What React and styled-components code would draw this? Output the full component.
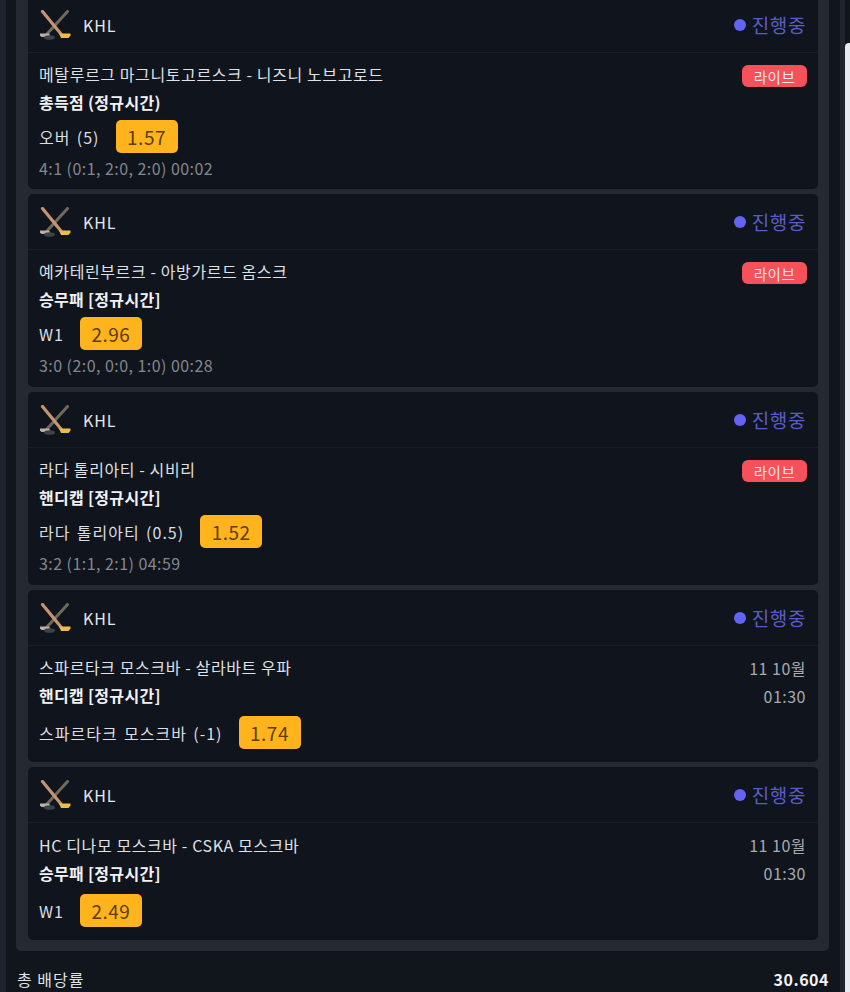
import React from "react";
import styled, { createGlobalStyle } from "styled-components";

const Global = createGlobalStyle`
  html, body { margin: 0; padding: 0; background: #11151c; }
  body { font-family: "Noto Sans CJK KR", "Noto Sans", sans-serif; }
`;

const Page = styled.div`
  width: 850px;
  height: 992px;
  overflow: hidden;
  display: grid;
  grid-template-columns: 6px 824px 20px;
  background: #11151c;
`;
const LeftStrip = styled.div`
  background: #1f232b;
`;
const Main = styled.main`
  margin-top: -3px;
  padding-left: 10px;
  padding-right: 1px;
`;
const Panel = styled.section`
  background: #252932;
  padding: 0 11px 11px 12px;
  border-radius: 0 0 5px 5px;
  display: flex;
  flex-direction: column;
  gap: 5px;
`;
const Card = styled.article`
  background: #10141c;
  border-radius: 5px;
  height: ${(p) => p.$h}px;
  display: flex;
  flex-direction: column;
`;
const Head = styled.header`
  height: 56px;
  flex: none;
  box-sizing: border-box;
  border-bottom: 1px solid #1a1e26;
  display: flex;
  align-items: center;
  padding: 0 12px 0 11px;
`;
const League = styled.span`
  margin-left: 12px;
  font-size: 16px;
  letter-spacing: 0.9px;
  color: #e6e8ea;
`;
const Status = styled.span`
  margin-left: auto;
  display: flex;
  align-items: center;
  gap: 6px;
  font-size: 19px;
  letter-spacing: 0.6px;
  color: #5c5cc9;
`;
const Dot = styled.i`
  width: 12px;
  height: 12px;
  border-radius: 50%;
  background: #6464f4;
`;
const Body = styled.div`
  position: relative;
  padding: ${(p) => p.$pad}px 11px 0 11px;
`;
const Teams = styled.div`
  font-size: 16px;
  letter-spacing: 0.6px;
  line-height: 26px;
  color: #dfe1e4;
`;
const Market = styled.div`
  font-size: 16px;
  letter-spacing: 0.3px;
  line-height: 26px;
  margin-top: 2px;
  font-weight: 700;
  color: #f1f2f3;
`;
const Pick = styled.div`
  display: flex;
  align-items: center;
  gap: 16px;
  margin-top: ${(p) => (p.$scheduled ? 8 : 5)}px;
  height: 33px;
  font-size: 16px;
  letter-spacing: 1px;
  word-spacing: 1.8px;
  color: #dcdee1;
`;
const Odds = styled.span`
  width: 62px;
  height: 33px;
  border-radius: 5px;
  background: #ffb41d;
  color: #5c3c08;
  font-size: 19px;
  letter-spacing: 0.5px;
  display: flex;
  align-items: center;
  justify-content: center;
`;
const Score = styled.div`
  margin-top: 2px;
  font-size: 16px;
  letter-spacing: 0.45px;
  line-height: 26px;
  color: #83878d;
`;
const LiveBadge = styled.span`
  position: absolute;
  top: 12px;
  right: 11px;
  width: 65px;
  height: 22px;
  border-radius: 6px;
  background: #f6505a;
  color: #f3e6e6;
  font-size: 14.5px;
  letter-spacing: 0.5px;
  display: flex;
  align-items: center;
  justify-content: center;
`;
const DateBox = styled.div`
  position: absolute;
  top: 8px;
  right: 12px;
  text-align: right;
  font-size: 16px;
  letter-spacing: 0.5px;
  line-height: 28px;
  color: #a6a9ae;
`;
const Footer = styled.footer`
  display: flex;
  justify-content: space-between;
  align-items: center;
  padding: 15px 0 0 1px;
  font-size: 16px;
  line-height: 26px;
  color: #dfe1e4;
`;
const FooterLabel = styled.span`
  letter-spacing: 1px;
`;
const Total = styled.b`
  font-weight: 700;
  letter-spacing: 0.5px;
  color: #f2f3f4;
`;
const Track = styled.div`
  display: grid;
  grid-template-columns: 10px 5px 5px;
  background: #11151c;
`;
const TrackGap = styled.div``;
const TrackLine = styled.div`
  background: #1f232b;
`;
const Thumb = styled.div`
  margin-top: 43px;
  background: #e7e9f1;
  border-radius: 4px 0 0 0;
`;

const SticksIcon = () => (
  <svg width="32" height="30" viewBox="0 0 32 30" aria-hidden="true">
    <path d="M28.5 1.5 8 24" stroke="#6f6a5c" strokeWidth="3" strokeLinecap="round" />
    <path d="M1 23.5h9l2 3.5H2.5L1 25.5z" fill="#b9b3a5" />
    <path d="M3.5 1.5 22 24" stroke="#c69470" strokeWidth="3.2" strokeLinecap="round" />
    <path d="M20 23.5h11.5v2L29.5 28H22z" fill="#eebc4d" />
    <ellipse cx="10.5" cy="27.5" rx="5.5" ry="2.3" fill="#3c4347" />
  </svg>
);

const games = [
  { h: 192, pad: 8, teams: "메탈루르그 마그니토고르스크 - 니즈니 노브고로드", market: "총득점 (정규시간)", pick: "오버 (5)", odds: "1.57", score: "4:1 (0:1, 2:0, 2:0) 00:02" },
  { h: 193, pad: 8, teams: "예카테린부르크 - 아방가르드 옴스크", market: "승무패 [정규시간]", pick: "W1", odds: "2.96", score: "3:0 (2:0, 0:0, 1:0) 00:28" },
  { h: 193, pad: 8, teams: "라다 톨리아티 - 시비리", market: "핸디캡 [정규시간]", pick: "라다 톨리아티 (0.5)", odds: "1.52", score: "3:2 (1:1, 2:1) 04:59" },
  { h: 172, pad: 8, teams: "스파르타크 모스크바 - 살라바트 우파", market: "핸디캡 [정규시간]", pick: "스파르타크 모스크바 (-1)", odds: "1.74" },
  { h: 173, pad: 9, teams: "HC 디나모 모스크바 - CSKA 모스크바", market: "승무패 [정규시간]", pick: "W1", odds: "2.49" },
];

export default function App() {
  return (
    <Page>
      <Global />
      <LeftStrip />
      <Main>
        <Panel>
          {games.map((g) => (
            <Card key={g.teams} $h={g.h}>
              <Head>
                <SticksIcon />
                <League>KHL</League>
                <Status>
                  <Dot />
                  진행중
                </Status>
              </Head>
              <Body $pad={g.pad}>
                <Teams>{g.teams}</Teams>
                <Market>{g.market}</Market>
                <Pick $scheduled={!g.score}>
                  {g.pick}
                  <Odds>{g.odds}</Odds>
                </Pick>
                {g.score && <Score>{g.score}</Score>}
                {g.score ? (
                  <LiveBadge>라이브</LiveBadge>
                ) : (
                  <DateBox>
                    11 10월
                    <br />
                    01:30
                  </DateBox>
                )}
              </Body>
            </Card>
          ))}
        </Panel>
        <Footer>
          <FooterLabel>총 배당률</FooterLabel>
          <Total>30.604</Total>
        </Footer>
      </Main>
      <Track>
        <TrackGap />
        <TrackLine />
        <Thumb />
      </Track>
    </Page>
  );
}
